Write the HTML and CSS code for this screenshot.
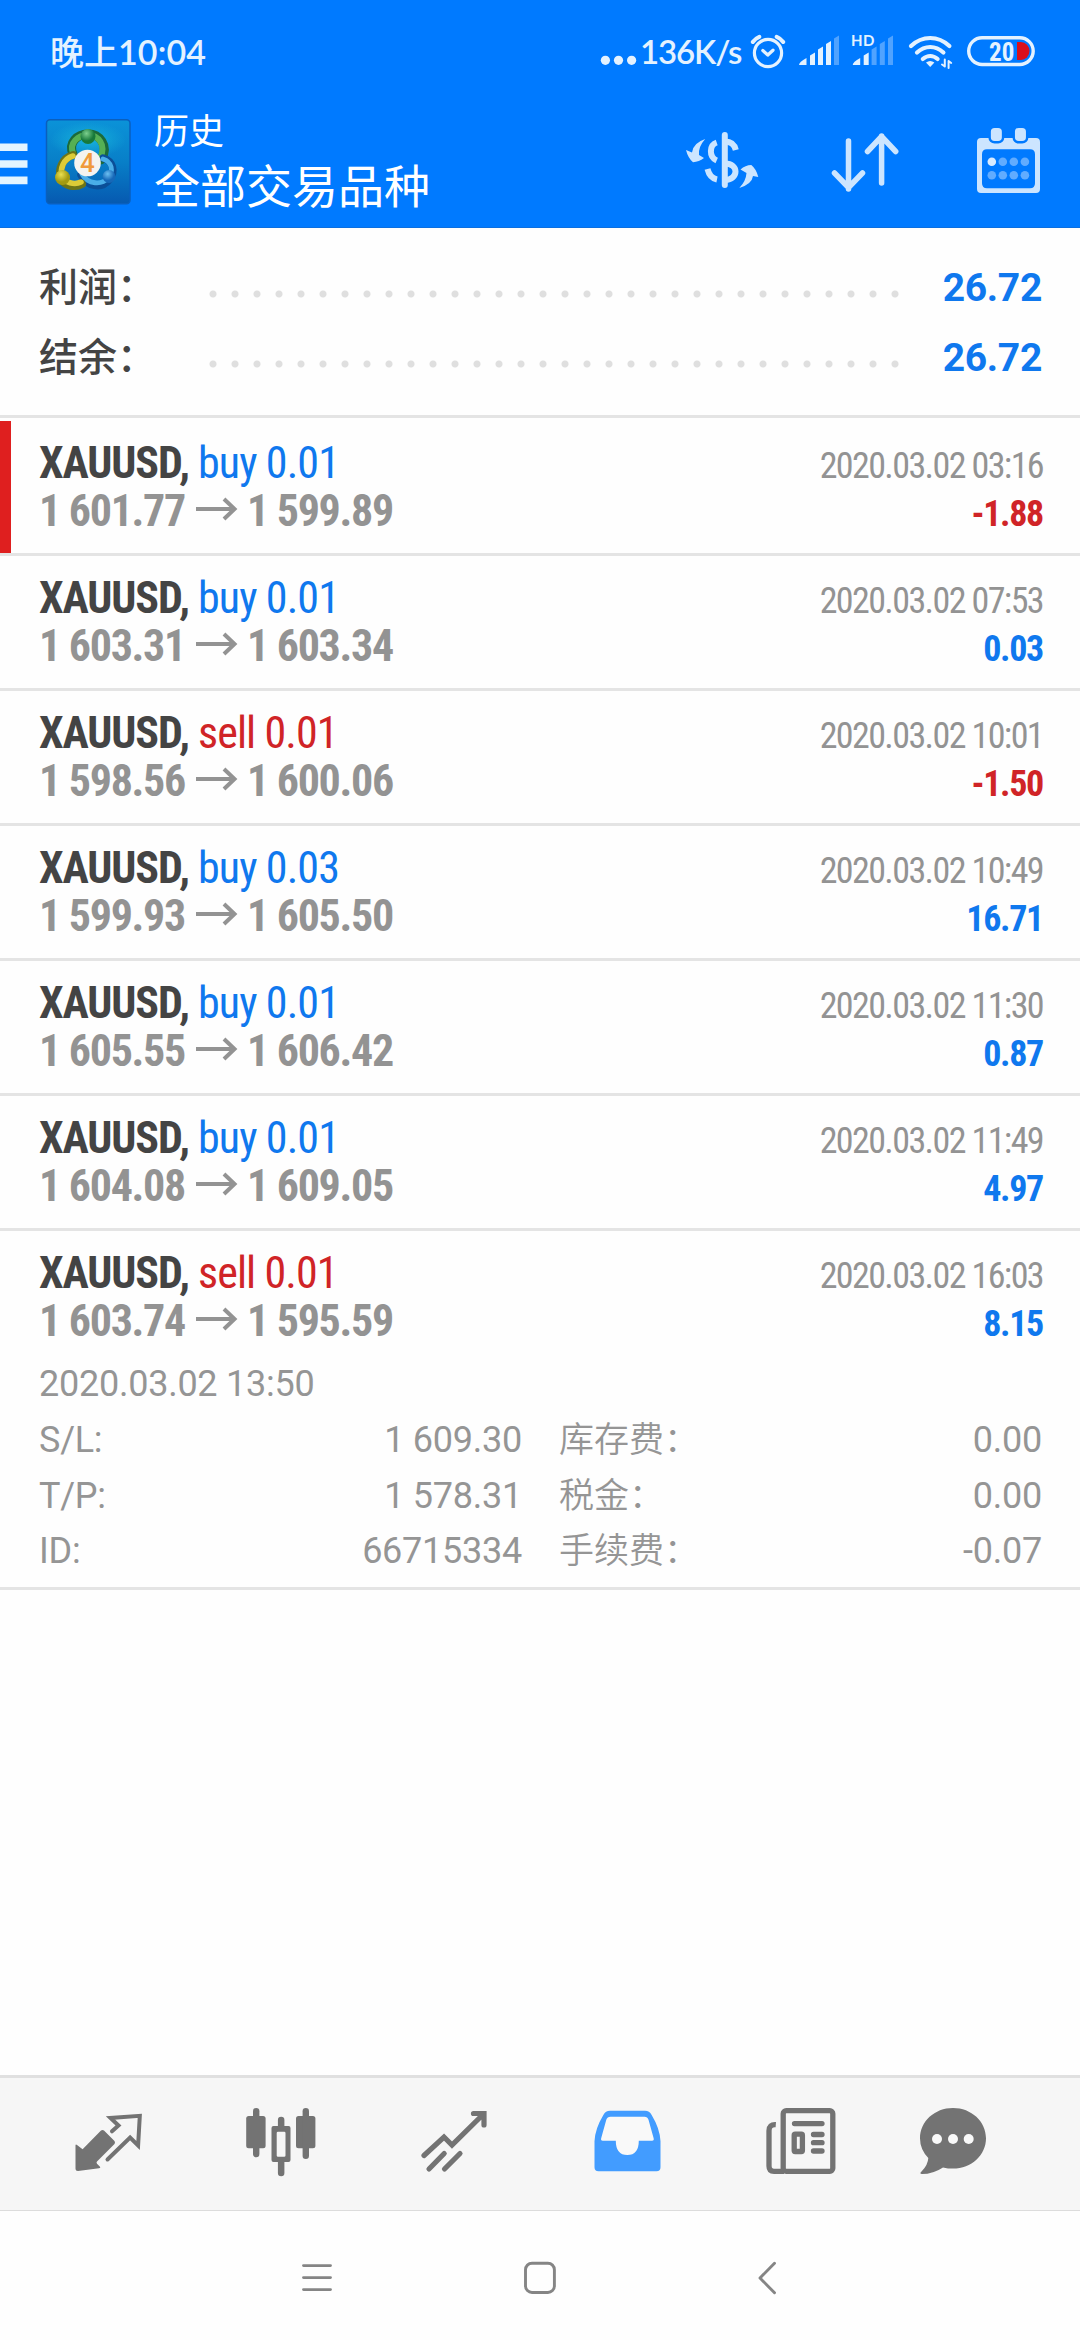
FILE: index.html
```html
<!DOCTYPE html>
<html lang="zh-CN">
<head>
<meta charset="utf-8">
<title>历史</title>
<link rel="stylesheet" href="styles.css">
</head>
<body>
<header class="top">
  <div class="status">
    <span class="clock">晚上<span class="time">10:04</span></span>
    <div class="status-right">
      <svg width="38" height="30" viewBox="600 36 38 30" fill="#e4f2ff"><circle cx="605.4" cy="60.3" r="4.6"/><circle cx="618.5" cy="60.3" r="4.6"/><circle cx="631.6" cy="60.3" r="4.6"/></svg>
      <span class="speed">136K/s</span>
      <svg class="status-icons" width="295" height="44" viewBox="745 30 295 44" fill="none" stroke-linecap="round" stroke-linejoin="round">
        <g stroke="#e4f2ff" stroke-width="3.2"><circle cx="768" cy="53" r="13.6"/><path d="M762.8 50.5l5 4.5 5.2-4.8"/><path stroke-width="4" d="M752.8 42q2.5-3.600 6.500-5.200M783.200 42q-2.500-3.600-6.500-5.200"/></g>
        <g fill="#e4f2ff"><path d="M799 65q0-3 7.500-7V65zM810 65V55.500l5-3V65zM818 65V49.500l5-3V65zM826 65V44l5-3V65z"/><path d="M852.700 65q0-3 7.500-7V65zM863.700 65V55.500l5-3V65z"/></g>
        <g fill="#e4f2ff" opacity=".35"><path d="M834 65V38.500l5-3V65zM871.600 65V49.500l5-3V65zM879.800 65V44l5-3V65zM888 65V38.500l5-3V65z"/></g>
        <text class="hd" x="851" y="46">HD</text>
        <g stroke="#e4f2ff" stroke-width="4.200"><path d="M911 46q8.500-8 19.200-8t19.200 8M917 52.500q6-5.500 13.200-5.500t13.200 5.500M922.800 59q3.500-3 7.400-3t7.400 3"/></g>
        <path fill="#e4f2ff" d="M926 62.500q4.200-3 8.400 0l-4.200 4.500z"/>
        <path stroke="#e4f2ff" stroke-width="2" d="M944.800 59.500v7l-2.800-2M948.600 68v-7l2.600 2"/>
        <rect x="968.700" y="37.700" width="64.500" height="26.800" rx="13.400" stroke="#e4f2ff" stroke-width="3.400"/>
        <path fill="#d90f1c" d="M1017 42h4a8.500 9 0 0 1 0 18h-4z"/>
        <text class="batt" x="989" y="60.500">20</text>
      </svg>
    </div>
  </div>
  <div class="toolbar">
    <svg width="140" height="100" viewBox="0 112 140 100">
      <defs>
        <linearGradient id="tile" x1="0" y1="0" x2="0" y2="1"><stop offset="0" stop-color="#0b93d8"/><stop offset=".5" stop-color="#087fc8"/><stop offset="1" stop-color="#0659b0"/></linearGradient>
        <radialGradient id="shine"><stop offset="0" stop-color="#18b7dc" stop-opacity=".9"/><stop offset="1" stop-color="#18b7dc" stop-opacity="0"/></radialGradient>
        <radialGradient id="g" cx=".4" cy=".3"><stop offset="0" stop-color="#7ccf8d"/><stop offset="1" stop-color="#17793a"/></radialGradient>
        <radialGradient id="y" cx=".4" cy=".3"><stop offset="0" stop-color="#eadf50"/><stop offset="1" stop-color="#a39a10"/></radialGradient>
        <radialGradient id="b" cx=".4" cy=".3"><stop offset="0" stop-color="#6cc0f2"/><stop offset="1" stop-color="#1668b8"/></radialGradient>
      </defs>
      <path fill="#e4f4ff" d="M0 143.500h27.500v7.600H0zM0 160.200h27.500v7.600H0zM0 176.600h27.500v7.600H0z"/>
      <rect x="46.500" y="119.800" width="83.500" height="84" rx="3.500" fill="url(#tile)" stroke="#0a5fbd" stroke-width="1.500"/>
      <ellipse cx="88" cy="140" rx="38" ry="18" fill="url(#shine)"/>
      <g fill="none" stroke-linecap="round">
        <path d="M73 154c-5-11 4-20 15-20s22 11 13 26" stroke="#1c6a3a" stroke-width="9"/>
        <path d="M73 153c-4-10 5-18 15-18s19 10 12 23" stroke="#55b054" stroke-width="6"/>
        <path d="M103 158c10 3 13 13 6 22s-22 7-28-5" stroke="#0b4f98" stroke-width="7.500"/>
        <path d="M103 159c9 3 11 12 5 19s-20 7-26-4" stroke="#4aaee8" stroke-width="4.800"/>
        <path d="M73 155c-11 3-15 15-12 23s14 10 21 6" stroke="#6c7418" stroke-width="8"/>
        <path d="M73 156c-10 3-13 13-11 20s13 9 19 6" stroke="#dccb37" stroke-width="5.500"/>
      </g>
      <circle cx="88" cy="136.500" r="7.500" fill="url(#g)"/><circle cx="62.500" cy="177.500" r="7.500" fill="url(#y)"/><circle cx="109" cy="176.500" r="6.500" fill="url(#b)"/>
      <circle cx="87.500" cy="163" r="13.300" fill="#f4f3f0"/>
      <text class="four" x="87.500" y="171.500">4</text>
    </svg>
    <div class="titles"><div class="t1">历史</div><div class="t2">全部交易品种</div></div>
    <svg class="actions" width="400" height="80" viewBox="680 122 400 80" fill="none" stroke="#cce5ff" stroke-width="6">
      <path stroke-linecap="round" d="M724.800 135v50"/>
      <path d="M716.700 142.500c-7.500 2.500-8 14.500 0 18M707.500 169c1.500 6 4.500 9.500 9.500 10.500M725 141.500c6 0 9.500 3 10.800 8.500M725 163.500c14 0 14 16 0 16.500" />
      <g fill="#cce5ff" stroke="none"><path d="M705.200 139Q693 143 692 152.500L686 150q2 8 7 12.300q6-.5 11-4.300l-5-3q-1-8 6.200-16z"/><path d="M739.300 188Q752 184 753 176l5.300 1q-2-8-7-12q-6 0-10.800 4.500l6 3.500q-.5 8-7.200 15z"/></g>
      <path stroke-width="5.500" stroke-linecap="round" stroke-linejoin="round" d="M848.500 141v48M834.500 173l14 14.500 14-14.500M881.600 183v-47M867.500 151.500l14.100-15 14.100 15"/>
      <g stroke="none"><path fill="#cce5ff" fill-rule="evenodd" d="M981 138h55q4 0 4 4v47q0 4-4 4h-55q-4 0-4-4v-47q0-4 4-4zM987 149.300q-5 0-5 5v29q0 5 5 5h43q5 0 5-5v-29q0-5-5-5z"/>
      <g fill="#cce5ff" stroke="#007aff" stroke-width="2.500"><rect x="989.600" y="126.800" width="13.500" height="15.500" rx="5"/><rect x="1013.700" y="126.800" width="13.500" height="15.500" rx="5"/></g>
      <g fill="#61acff"><circle cx="991.800" cy="161.700" r="4.300" fill="#d8ebff"/><circle cx="1002.800" cy="161.700" r="4.300"/><circle cx="1013.800" cy="161.700" r="4.300"/><circle cx="1024.900" cy="161.700" r="4.300"/><circle cx="991.800" cy="175.300" r="4.300"/><circle cx="1002.800" cy="175.300" r="4.300"/><circle cx="1013.800" cy="175.300" r="4.300"/><circle cx="1024.900" cy="175.300" r="4.300"/></g></g>
    </svg>
  </div>
</header>

<section class="summary">
  <div class="sum-row"><span class="sum-label">利润：</span><span class="leader"></span><span class="sum-value">26.72</span></div>
  <div class="sum-row"><span class="sum-label">结余：</span><span class="leader"></span><span class="sum-value">26.72</span></div>
</section>

<main class="list">
  <article class="deal marked">
    <div class="line"><span class="sym"><b>XAUUSD,</b> <span class="buy">buy 0.01</span></span><span class="date">2020.03.02 03:16</span></div>
    <div class="line"><span class="price">1 601.77<svg class="arrow" viewBox="0 0 42 24"><path d="M0 12h38M28 2l10.500 10L28 22"/></svg>1 599.89</span><span class="profit sell">-1.88</span></div>
  </article>
  <article class="deal">
    <div class="line"><span class="sym"><b>XAUUSD,</b> <span class="buy">buy 0.01</span></span><span class="date">2020.03.02 07:53</span></div>
    <div class="line"><span class="price">1 603.31<svg class="arrow" viewBox="0 0 42 24"><path d="M0 12h38M28 2l10.500 10L28 22"/></svg>1 603.34</span><span class="profit buy">0.03</span></div>
  </article>
  <article class="deal">
    <div class="line"><span class="sym"><b>XAUUSD,</b> <span class="sell">sell 0.01</span></span><span class="date">2020.03.02 10:01</span></div>
    <div class="line"><span class="price">1 598.56<svg class="arrow" viewBox="0 0 42 24"><path d="M0 12h38M28 2l10.500 10L28 22"/></svg>1 600.06</span><span class="profit sell">-1.50</span></div>
  </article>
  <article class="deal">
    <div class="line"><span class="sym"><b>XAUUSD,</b> <span class="buy">buy 0.03</span></span><span class="date">2020.03.02 10:49</span></div>
    <div class="line"><span class="price">1 599.93<svg class="arrow" viewBox="0 0 42 24"><path d="M0 12h38M28 2l10.500 10L28 22"/></svg>1 605.50</span><span class="profit buy">16.71</span></div>
  </article>
  <article class="deal">
    <div class="line"><span class="sym"><b>XAUUSD,</b> <span class="buy">buy 0.01</span></span><span class="date">2020.03.02 11:30</span></div>
    <div class="line"><span class="price">1 605.55<svg class="arrow" viewBox="0 0 42 24"><path d="M0 12h38M28 2l10.500 10L28 22"/></svg>1 606.42</span><span class="profit buy">0.87</span></div>
  </article>
  <article class="deal">
    <div class="line"><span class="sym"><b>XAUUSD,</b> <span class="buy">buy 0.01</span></span><span class="date">2020.03.02 11:49</span></div>
    <div class="line"><span class="price">1 604.08<svg class="arrow" viewBox="0 0 42 24"><path d="M0 12h38M28 2l10.500 10L28 22"/></svg>1 609.05</span><span class="profit buy">4.97</span></div>
  </article>
  <article class="deal open">
    <div class="line"><span class="sym"><b>XAUUSD,</b> <span class="sell">sell 0.01</span></span><span class="date">2020.03.02 16:03</span></div>
    <div class="line"><span class="price">1 603.74<svg class="arrow" viewBox="0 0 42 24"><path d="M0 12h38M28 2l10.500 10L28 22"/></svg>1 595.59</span><span class="profit buy">8.15</span></div>
    <div class="opened">2020.03.02 13:50</div>
    <div class="details">
      <span>S/L:</span><span class="num">1 609.30</span><span class="cn">库存费：</span><span class="num">0.00</span>
      <span>T/P:</span><span class="num">1 578.31</span><span class="cn">税金：</span><span class="num">0.00</span>
      <span>ID:</span><span class="num">66715334</span><span class="cn">手续费：</span><span class="num">-0.07</span>
    </div>
  </article>
</main>

<nav class="tabs">
  <svg viewBox="22 18 173 131"><path fill="#737373" d="M75.500 85.500q0-1.500 1.500-.5l5.600 4.300L101 70.500q1.500-1 3 0l10.500 10.500q1 1.500 0 3L97 101.500q-1 1 0 2.200l3 3q1 1.300-1 1.500L78 111q-2.500 0-2.500-2.500z"/><path fill="none" stroke="#737373" stroke-width="4" stroke-linejoin="miter" stroke-linecap="round" d="M112 71.300l6.500-5.800-8-7.500 29.300-2.200-1.700 29.700-8-8L107.500 99.500"/></svg>
  <svg viewBox="195 18 173 131"><g fill="#737373"><rect x="246.200" y="56" width="19.400" height="32.300" rx="2.500"/><rect x="253" y="48" width="6.400" height="49.300" rx="3.200"/><path fill-rule="evenodd" d="M273.500 66h15q2 0 2 2v32q0 2-2 2h-15q-2 0-2-2V68q0-2 2-2zM278 71.700q-1.300 0-1.300 1.300v22.500q0 1.200 1.300 1.200h6.200q1.300 0 1.300-1.200V73q0-1.300-1.300-1.300z"/><path d="M277.900 67v-7a3.250 3.250 0 0 1 6.500 0v7zM277.900 101v12a3.250 3.250 0 0 0 6.500 0v-12z"/><rect x="296" y="56" width="19.400" height="32.300" rx="2.500"/><rect x="302.600" y="48" width="6.400" height="51" rx="3.200"/></g></svg>
  <svg viewBox="368 18 173 131"><path fill="none" stroke="#737373" stroke-width="5.200" stroke-linecap="round" stroke-linejoin="miter" d="M424 95.500l20-18.500 8 8 31.500-31M473.500 53.500h10.500v11.500M429 109l15.200-15.500M444.500 109L460 93.500"/></svg>
  <svg viewBox="541 18 173 131"><path fill="#429cff" d="M610 50.700h35q4.500 0 6.500 4 8.500 14 9 26.500v26q0 4-4 4h-58q-4 0-4-4v-26q.5-12.500 9-26.500 2-4 6.500-4z"/><path fill="#f9f9f9" d="M610.500 56.700h34q3 0 4 3l5 18q1 3-1.500 3h-13.200q0 14.300-11.500 14.300t-11.500-14.300h-13q-2.500 0-1.500-3l5-18q1-3 4.200-3z"/></svg>
  <svg viewBox="714 18 173 131"><g fill="none" stroke="#737373" stroke-width="5.300"><rect x="783.200" y="50.700" width="49.600" height="60.600" rx="3"/><path d="M775.800 64.700q-6.800-.5-6.800 6V106q0 5.300 5 5.300h10"/><path stroke-linecap="round" d="M794.500 63.600h27.500M813.500 74.500h8.500M813.500 82.700h8.500M813.500 91h8.500"/><rect x="794.200" y="74.200" width="8.200" height="17.300" rx="1"/></g></svg>
  <svg viewBox="887 18 173 131"><path fill="#737373" d="M953 48c18.500 0 33 13.500 33 30.300s-14.500 30.300-33 30.300q-5 0-10-1.200-10 6.600-21 6.600-3-.5-.5-2.500 6.500-6.500 6.800-13.500-8.300-8.500-8.300-19.700C920 61.500 934.500 48 953 48z"/><g fill="#f9f9f9"><circle cx="937" cy="79" r="5"/><circle cx="953" cy="79" r="5"/><circle cx="968.700" cy="79" r="5"/></g></svg>
</nav>
<footer class="sysnav">
  <svg width="1080" height="129" viewBox="0 151 1080 129" fill="none" stroke="#858585" stroke-width="2.900" stroke-linecap="round" stroke-linejoin="round"><path d="M303.500 205.600h27M303.500 217.600h27M303.500 229.600h27"/><rect x="525.500" y="203.200" width="28.900" height="29.300" rx="6.500"/><path d="M774.500 203.200l-14.500 14.800 14.500 14.800"/></svg>
</footer>
</body>
</html>
```

FILE: styles.css
```css
* { box-sizing: border-box; }
body {
  margin: 0;
  width: 1080px;
  height: 2340px;
  display: flex;
  flex-direction: column;
  background: #fefefe;
  color: #444;
  font-family: Roboto, "Noto Sans CJK SC", sans-serif;
  overflow: hidden;
}
svg { display: block; flex: none; }
.top { height: 228px; background: #007aff; border-bottom: 1px solid #0b6fe0; color: #fff; }
.status { height: 102px; padding: 0 40px 0 50px; display: flex; align-items: center; justify-content: space-between; }
.clock, .speed { font-family: Lato, "Noto Sans CJK SC", sans-serif; font-weight: 600; color: #e4f2ff; }
.clock { font-size: 34px; padding-bottom: 2px; font-weight: 500; }
.time { font-weight: 600; letter-spacing: .1px; }
.status-right { display: flex; align-items: center; }
.speed { font-size: 33px; width: 107px; padding-left: 2px; white-space: nowrap; letter-spacing: -1.1px; }
.status-icons { margin-top: 2px; }
.hd { font: 700 15px Lato, sans-serif; fill: #e4f2ff; letter-spacing: .5px; }
.batt { font: 700 25px "Roboto Condensed", Roboto, sans-serif; fill: #e4f2ff; }
.four { font: 500 26px Roboto, sans-serif; fill: #f09a3c; text-anchor: middle; }
.toolbar { display: flex; height: 120px; align-items: center; }
.titles { width: 540px; padding: 0 0 6px 14px; font-family: "Noto Sans CJK SC", sans-serif; font-weight: 400; }
.t1 { font-size: 35px; line-height: 48px; }
.t2 { font-size: 46px; line-height: 60px; }

.summary { height: 190px; padding: 24px 38px 0 39px; border-bottom: 3px solid #e4e4e4; }
.sum-row { height: 70px; display: flex; align-items: center; }
.sum-label { width: 163px; font-size: 39px; font-weight: 500; padding-bottom: 7px; }
.leader { width: 704px; height: 8px; margin-top: 14px; background: radial-gradient(circle at 11px 4px, #dfdfdf 3px, transparent 4px) 0 0 / 22px 8px repeat-x; }
.sum-value { flex: 1; text-align: right; font-size: 39px; font-weight: 700; color: #0f78ee; padding-top: 2px; letter-spacing: -.3px; }

.list { flex: 1; padding-top: 3px; }
.deal { height: 135px; border-bottom: 3px solid #e4e4e4; padding: 18px 38px 0 39px; }
.marked { box-shadow: inset 11px 0 #df1f1f; }
.open { height: 359px; }
.line { height: 48px; display: flex; justify-content: space-between; align-items: baseline; font-family: "Roboto Condensed", Roboto, sans-serif; font-stretch: 75%; line-height: 48px; white-space: nowrap; }
.sym, .price { font-size: 44px; }
.sym { letter-spacing: -.9px; }
.sym b { letter-spacing: -1.1px; }
.price { font-weight: 700; color: #939393; letter-spacing: -1.3px; }
.arrow { display: inline-block; width: 42px; height: 24px; margin: 0 9px 0 11px; vertical-align: 5px; fill: none; stroke: #939393; stroke-width: 4; }
.buy { color: #0f78ee; }
.sell { color: #d02427; }
.date { font-size: 36px; color: #939393; letter-spacing: -1.6px; margin-right: -1px; }
.profit { font-size: 36px; font-weight: 700; letter-spacing: -1.3px; margin-right: -1px; }
.opened { margin-top: 11px; height: 57px; line-height: 56px; font-size: 36px; color: #959595; letter-spacing: -.25px; }
.details { display: grid; grid-template-columns: 120px 363px 1fr 1fr; grid-auto-rows: 55.500px; line-height: 55.500px; font-size: 36px; color: #959595; letter-spacing: -.25px; }
.num { text-align: right; }
.cn { padding-left: 37px; font-size: 35px; font-weight: 350; letter-spacing: 0; }

.tabs { height: 136px; padding-left: 22px; display: flex; background: #f6f6f6; border-top: 3px solid #e0e0e0; border-bottom: 1px solid #dcdcdc; }
.tabs svg { width: 173px; height: 131px; }
.sysnav { height: 129px; }
```
